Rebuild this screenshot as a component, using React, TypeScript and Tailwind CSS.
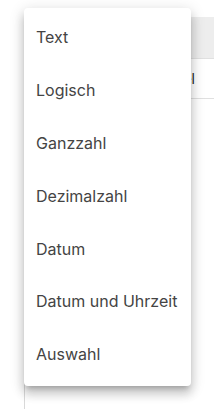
import React from 'react';

const types = ['Text', 'Logisch', 'Ganzzahl', 'Dezimalzahl', 'Datum', 'Datum und Uhrzeit', 'Auswahl'];

export default function App() {
  return (
    <div className="relative h-[409px] w-[214px] overflow-hidden bg-white font-['Inter',sans-serif]">
      {/* table behind the menu */}
      <div className="ml-[24px] mt-[17px] h-[392px] border-l border-[#d9d9d9]">
        <div className="h-[42px] border-b border-[#e0e0e0] bg-[#ededed]" />
        <div className="flex h-[40px] items-center border-b border-[#e0e0e0]">
          <span className="w-[170px] text-right text-sm text-[#222]">Titel</span>
        </div>
      </div>

      {/* dropdown */}
      <ul className="absolute left-[24px] top-[8px] w-[167px] rounded-[4px] bg-white py-1 shadow-[0_5px_5px_-3px_rgba(0,0,0,0.2),0_8px_10px_1px_rgba(0,0,0,0.14),0_3px_14px_2px_rgba(0,0,0,0.12)]">
        {types.map((t) => (
          <li key={t} className="flex h-[52.8px] items-center whitespace-nowrap pb-[2px] pl-3 text-base leading-6 text-[#444]">
            {t}
          </li>
        ))}
      </ul>
    </div>
  );
}
